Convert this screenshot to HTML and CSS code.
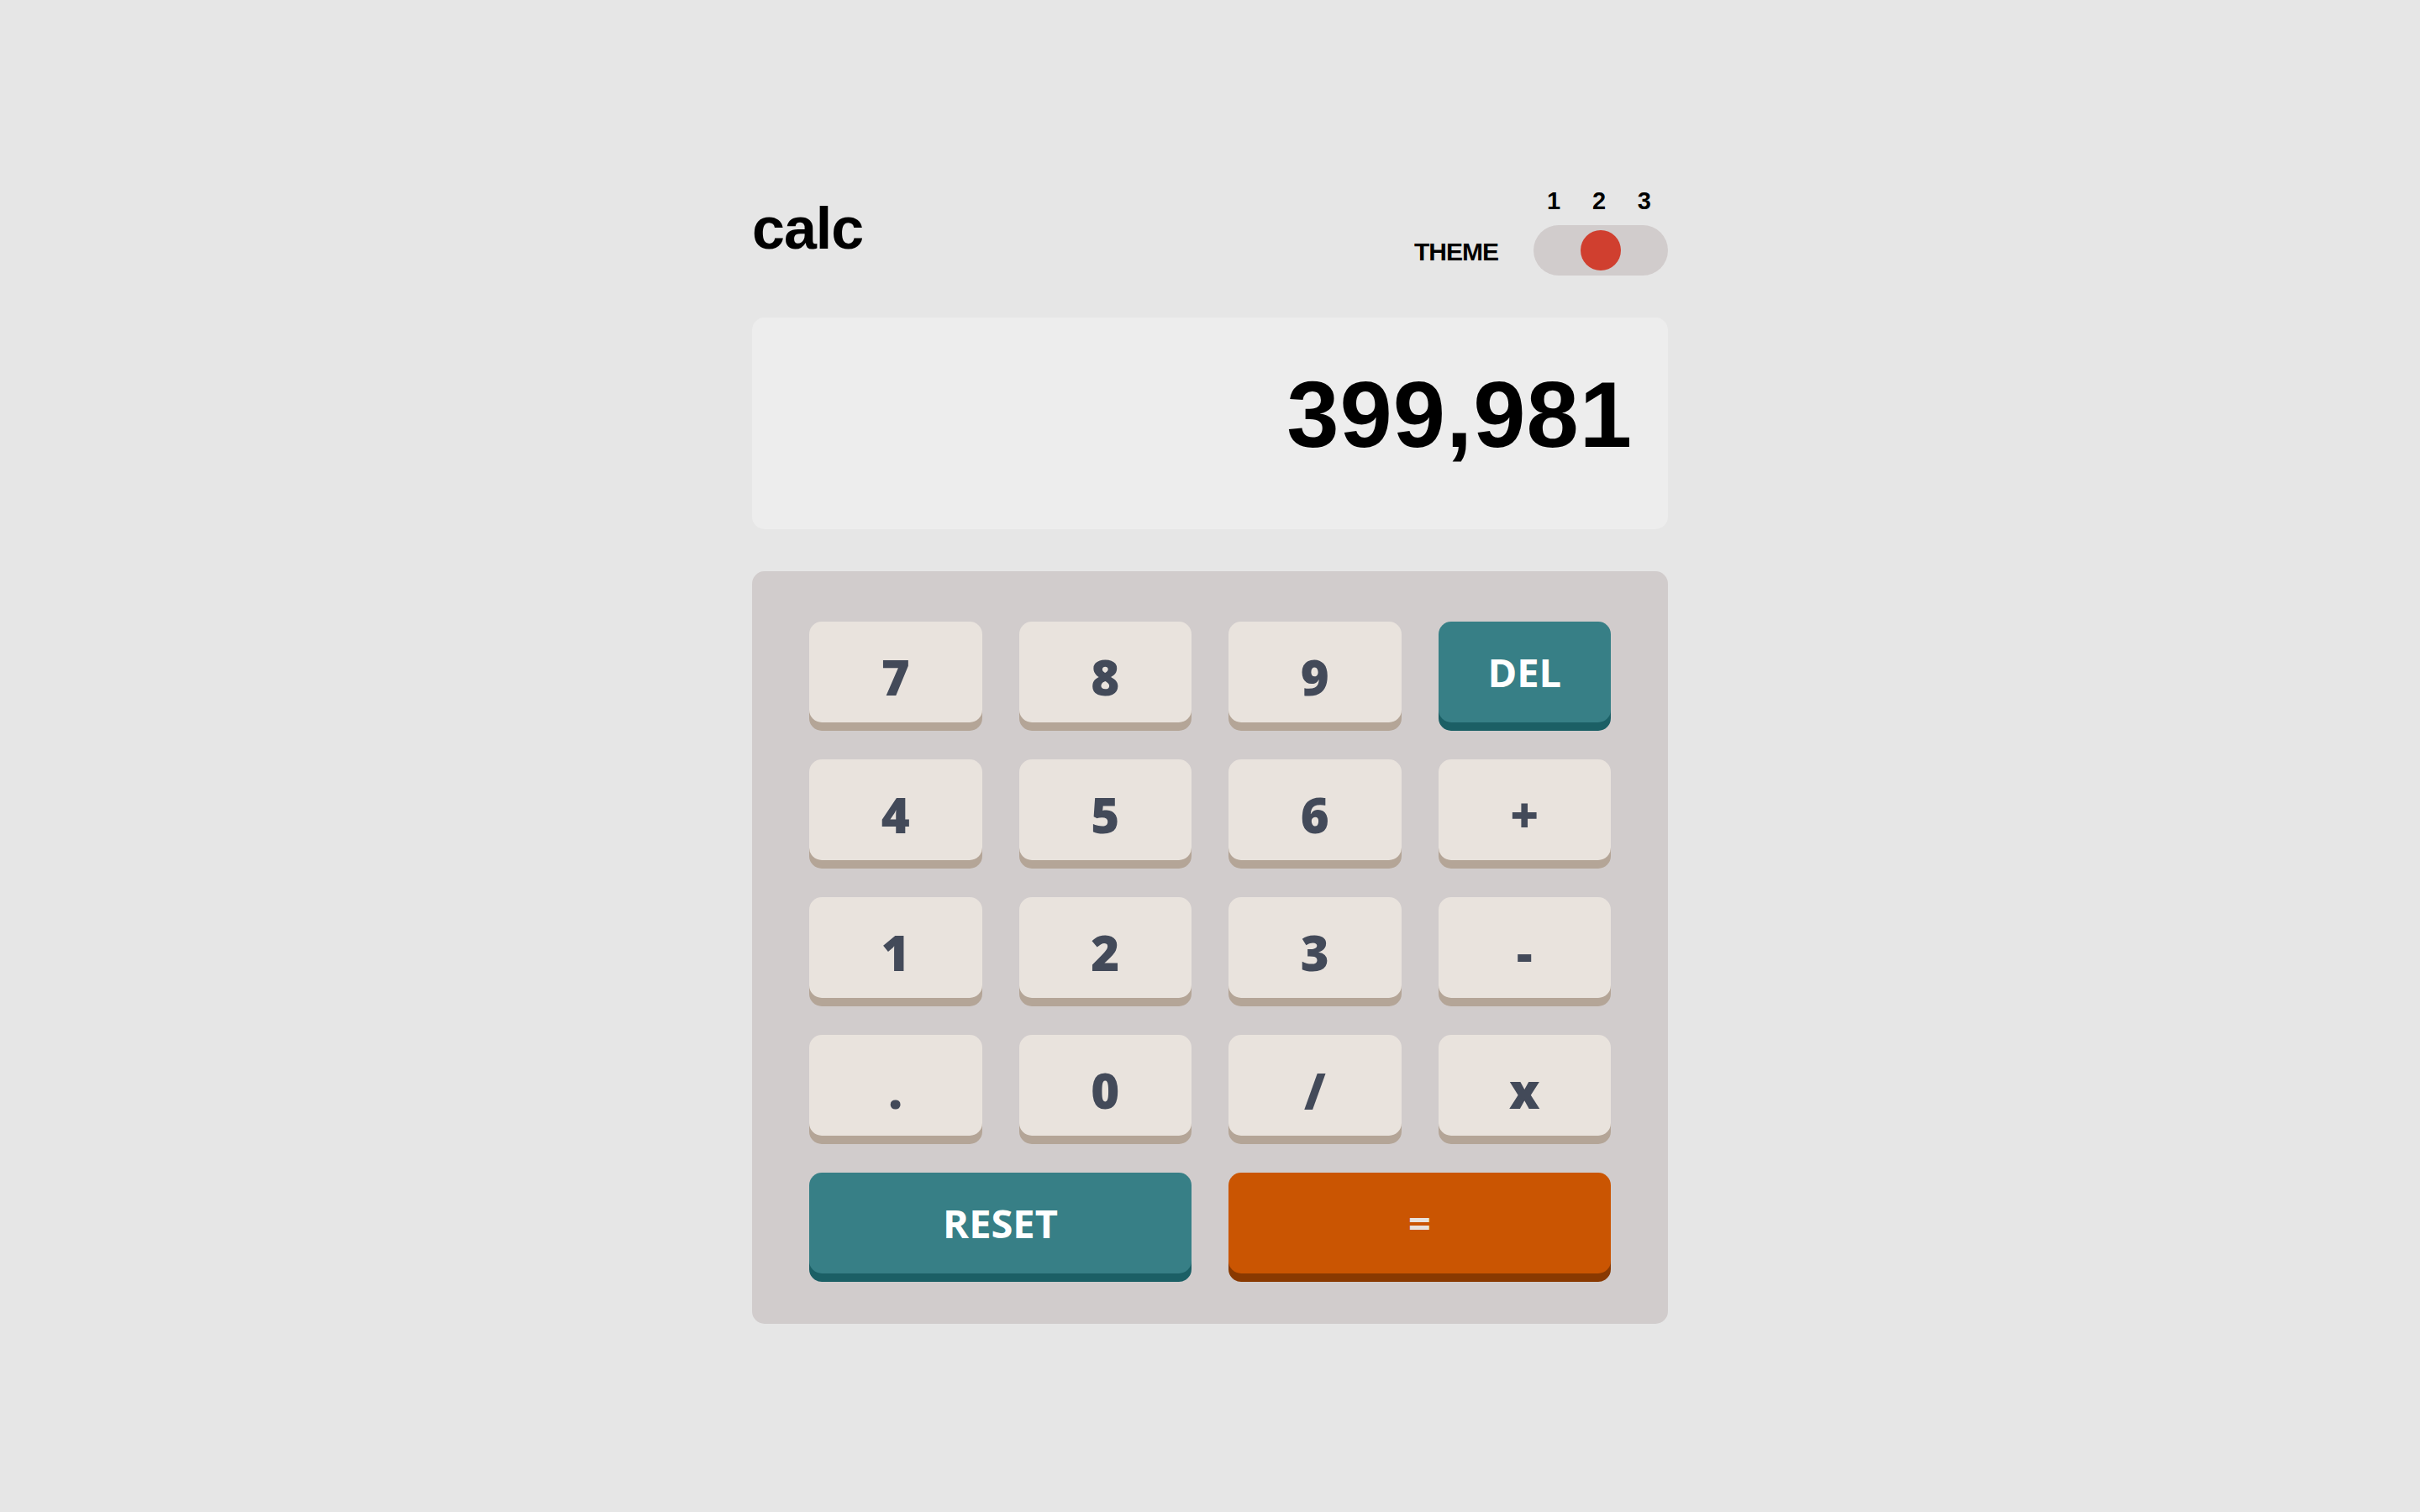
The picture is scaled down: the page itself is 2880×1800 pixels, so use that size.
FILE: index.html
```html
<!DOCTYPE html>
<html lang="en">
<head>
<meta charset="utf-8">
<title>calc</title>
<link rel="stylesheet" href="styles.css">
</head>
<body>
<main class="calculator">
  <header class="top">
    <h1 class="logo">calc</h1>
    <div class="theme">
      <span class="theme-label">THEME</span>
      <div class="switch">
        <div class="switch-nums"><span>1</span><span>2</span><span>3</span></div>
        <div class="switch-track"><span class="switch-knob"></span></div>
      </div>
    </div>
  </header>
  <section class="screen">399,981</section>
  <section class="keypad">
    <button class="key">7</button>
    <button class="key">8</button>
    <button class="key">9</button>
    <button class="key key-teal">DEL</button>
    <button class="key">4</button>
    <button class="key">5</button>
    <button class="key">6</button>
    <button class="key">+</button>
    <button class="key">1</button>
    <button class="key">2</button>
    <button class="key">3</button>
    <button class="key">-</button>
    <button class="key">.</button>
    <button class="key">0</button>
    <button class="key">/</button>
    <button class="key">x</button>
    <button class="key key-teal key-wide">RESET</button>
    <button class="key key-orange key-wide">=</button>
  </section>
</main>
</body>
</html>
```
FILE: styles.css
```css
html, body {
  margin: 0;
  padding: 0;
}
body {
  background: #e6e6e6;
  min-height: 100vh;
  display: flex;
  align-items: center;
  justify-content: center;
  font-family: "Liberation Sans", Arial, sans-serif;
  color: #000;
}
.calculator {
  width: 1090px;
}
.top {
  display: flex;
  justify-content: space-between;
  align-items: flex-end;
  margin-bottom: 50px;
}
.logo {
  margin: 0 0 21px 0;
  font-size: 70px;
  font-weight: 700;
  line-height: 1;
  letter-spacing: -1px;
}
.theme {
  display: flex;
  align-items: flex-end;
  gap: 42px;
}
.theme-label {
  font-size: 30px;
  font-weight: 700;
  line-height: 1;
  letter-spacing: -1px;
  margin-bottom: 13px;
}
.switch {
  display: flex;
  flex-direction: column;
  width: 160px;
}
.switch-nums {
  display: flex;
  justify-content: space-between;
  padding: 0 20px 0 16px;
  font-size: 29px;
  font-weight: 700;
  line-height: 1;
  margin-bottom: 14px;
}
.switch-track {
  height: 60px;
  border-radius: 30px;
  background: #d1cccc;
  display: flex;
  align-items: center;
  justify-content: center;
}
.switch-knob {
  width: 48px;
  height: 48px;
  border-radius: 50%;
  background: #d03f2f;
}
.screen {
  box-sizing: border-box;
  height: 252px;
  background: #ededed;
  border-radius: 15px;
  padding: 60px 42px 0 0;
  text-align: right;
  font-size: 112px;
  font-weight: 700;
  line-height: 1;
  letter-spacing: 1px;
}
.keypad {
  margin-top: 50px;
  background: #d1cccc;
  border-radius: 15px;
  padding: 60px 68px;
  display: grid;
  grid-template-columns: repeat(4, 1fr);
  grid-auto-rows: 120px;
  gap: 44px;
}
.key {
  box-sizing: border-box;
  border: none;
  border-radius: 15px;
  background: #e9e3dd;
  box-shadow: 0 10px 0 #b4a597;
  color: #434a59;
  font-family: "Open Sans", "Noto Sans", sans-serif;
  font-weight: 800;
  font-size: 58px;
  padding: 11px 0 0 0;
  display: flex;
  align-items: center;
  justify-content: center;
  cursor: pointer;
}
.key-teal {
  background: #377f86;
  box-shadow: 0 10px 0 #1b5f65;
  color: #ffffff;
  font-size: 47px;
  font-weight: 700;
  padding: 0;
}
.key-orange {
  background: #ca5502;
  box-shadow: 0 10px 0 #893901;
  color: #e9e3dd;
  font-size: 47px;
  font-weight: 700;
  padding: 0;
}
.key-wide {
  grid-column: span 2;
}
```
